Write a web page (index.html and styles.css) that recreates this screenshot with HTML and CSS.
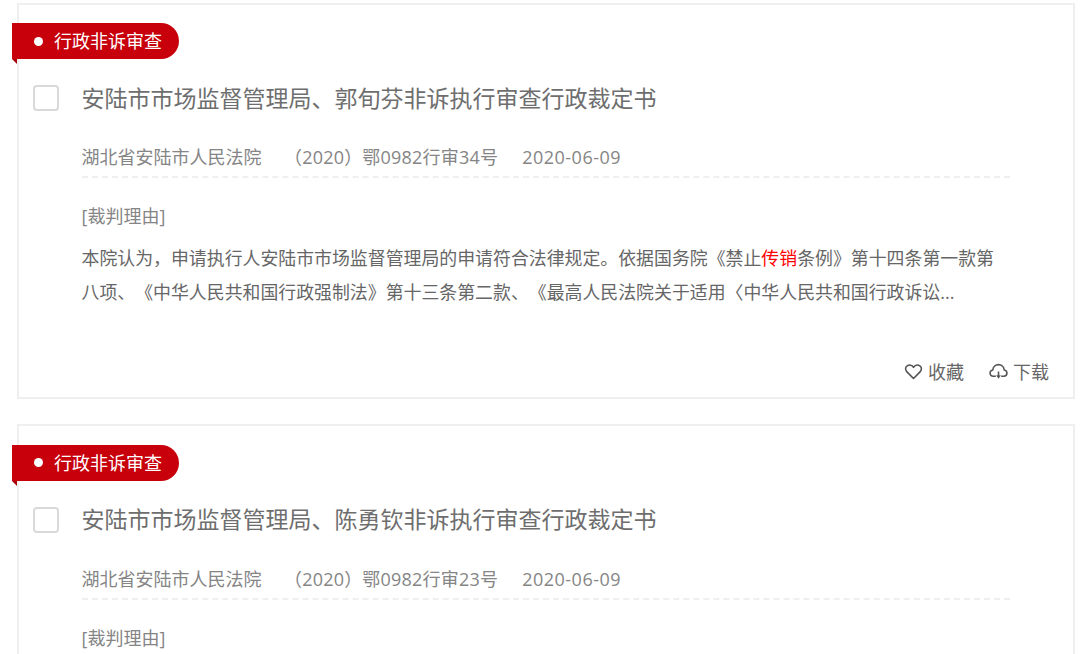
FILE: index.html
```html
<!DOCTYPE html>
<html lang="zh-CN">
<head>
<meta charset="utf-8">
<title>裁判文书列表</title>
<link rel="stylesheet" href="styles.css">
</head>
<body>
<main class="list">
  <article class="card">
    <div class="tag"><span class="dot"></span>行政非诉审查</div>
    <div class="head"><span class="check"></span><h2 class="title">安陆市市场监督管理局、郭旬芬非诉执行审查行政裁定书</h2></div>
    <div class="meta"><span class="court">湖北省安陆市人民法院</span><span class="case">（2020）鄂0982行审34号</span><span class="date">2020-06-09</span></div>
    <div class="reason">[裁判理由]</div>
    <p class="body">本院认为，申请执行人安陆市市场监督管理局的申请符合法律规定。依据国务院《禁止<em>传销</em>条例》第十四条第一款第八项、《中华人民共和国行政强制法》第十三条第二款、《最高人民法院关于适用〈中华人民共和国行政诉讼...</p>
    <div class="actions">
      <span class="action"><svg class="icon" viewBox="0 0 18 18"><path d="M9 15.600 2.600 9.100C.9 7.300 1.300 4.700 3 3.600 4.900 2.400 7.600 2.900 9 5.100 10.400 2.900 13.100 2.400 15 3.600 16.700 4.700 17.100 7.300 15.400 9.100Z"/></svg>收藏</span>
      <span class="action"><svg class="icon" viewBox="0 0 18 18"><path d="M6.500 13.500H4C2.200 13.500 1 12.200 1 10.500 1 8.900 2.100 7.700 3.600 7.500 3.800 4.500 6.200 2.500 9 2.500 11.800 2.500 14.200 4.500 14.400 7.500 15.900 7.700 17 8.900 17 10.500 17 12.200 15.800 13.500 14 13.500H11.500"/><path d="M9 9V13"/><path class="solid" d="M6.800 12.500 9 15.800 11.200 12.500Z"/></svg>下载</span>
    </div>
  </article>
  <article class="card">
    <div class="tag"><span class="dot"></span>行政非诉审查</div>
    <div class="head"><span class="check"></span><h2 class="title">安陆市市场监督管理局、陈勇钦非诉执行审查行政裁定书</h2></div>
    <div class="meta"><span class="court">湖北省安陆市人民法院</span><span class="case">（2020）鄂0982行审23号</span><span class="date">2020-06-09</span></div>
    <div class="reason">[裁判理由]</div>
  </article>
</main>
</body>
</html>
```
FILE: styles.css
```css
html, body { margin: 0; padding: 0; background: #fff; }
body {
  height: 654px;
  overflow: hidden;
  font-family: "Open Sans", "Noto Sans CJK SC", sans-serif;
  color: #777;
  text-spacing-trim: space-all;
}
.list {
  display: flex;
  flex-direction: column;
  gap: 25.500px;
  padding: 2.500px 5px 0 17px;
}
.card {
  position: relative;
  box-sizing: border-box;
  height: 396px;
  flex: none;
  border: 2px solid #efefef;
  padding: 18.500px 24px 0 14px;
}
.tag {
  position: relative;
  display: flex;
  align-items: center;
  box-sizing: border-box;
  width: 167px;
  height: 36px;
  margin-left: -21px;
  padding-left: 22px;
  background: #c7000b;
  border-radius: 0 18px 18px 0;
  color: #fff;
  font-size: 18px;
  line-height: 34px;
}
.tag::after {
  content: "";
  position: absolute;
  left: 0;
  top: 36px;
  border-top: 5px solid #a8000a;
  border-left: 5px solid transparent;
}
.dot {
  width: 9px;
  height: 9px;
  margin-right: 11px;
  border-radius: 50%;
  background: #fff;
}
.head {
  display: flex;
  align-items: center;
  margin-top: 20px;
  height: 38px;
}
.check {
  box-sizing: border-box;
  width: 26px;
  height: 26px;
  border: 2px solid #d9d9d9;
  border-radius: 4px;
  margin-right: 22.500px;
}
.title {
  margin: -1px 0 0;
  font-size: 23px;
  font-weight: 400;
  line-height: 38px;
  color: #6e6e6e;
}
.meta {
  display: flex;
  margin: 23px 0 0 49px;
  height: 38px;
  width: 928px;
  box-sizing: border-box;
  border-bottom: 2px dashed #efefef;
  font-size: 18px;
  line-height: 34px;
  color: #858585;
}
.court { margin: 0 22.500px 0 -.5px; }
.case { margin-right: 24px; letter-spacing: .2px; }
.date { letter-spacing: .5px; }
.reason {
  margin: 20px 0 0 48.500px;
  font-size: 18px;
  line-height: 36px;
  color: #858585;
}
.body {
  margin: 7px 0 0 48.500px;
  width: 922px;
  font-size: 17.900px;
  line-height: 34px;
  color: #666;
}
.body em { font-style: normal; color: #f00; }
.actions {
  position: absolute;
  right: 24px;
  bottom: 7px;
  display: flex;
  gap: 25px;
  font-size: 18px;
  line-height: 36px;
  color: #666;
}
.action { display: flex; align-items: center; gap: 5px; }
.icon {
  width: 19px;
  height: 19px;
  fill: none;
  stroke: #555;
  stroke-width: 1.500;
  stroke-linejoin: round;
}
.icon .solid { fill: #555; stroke: none; }
```
